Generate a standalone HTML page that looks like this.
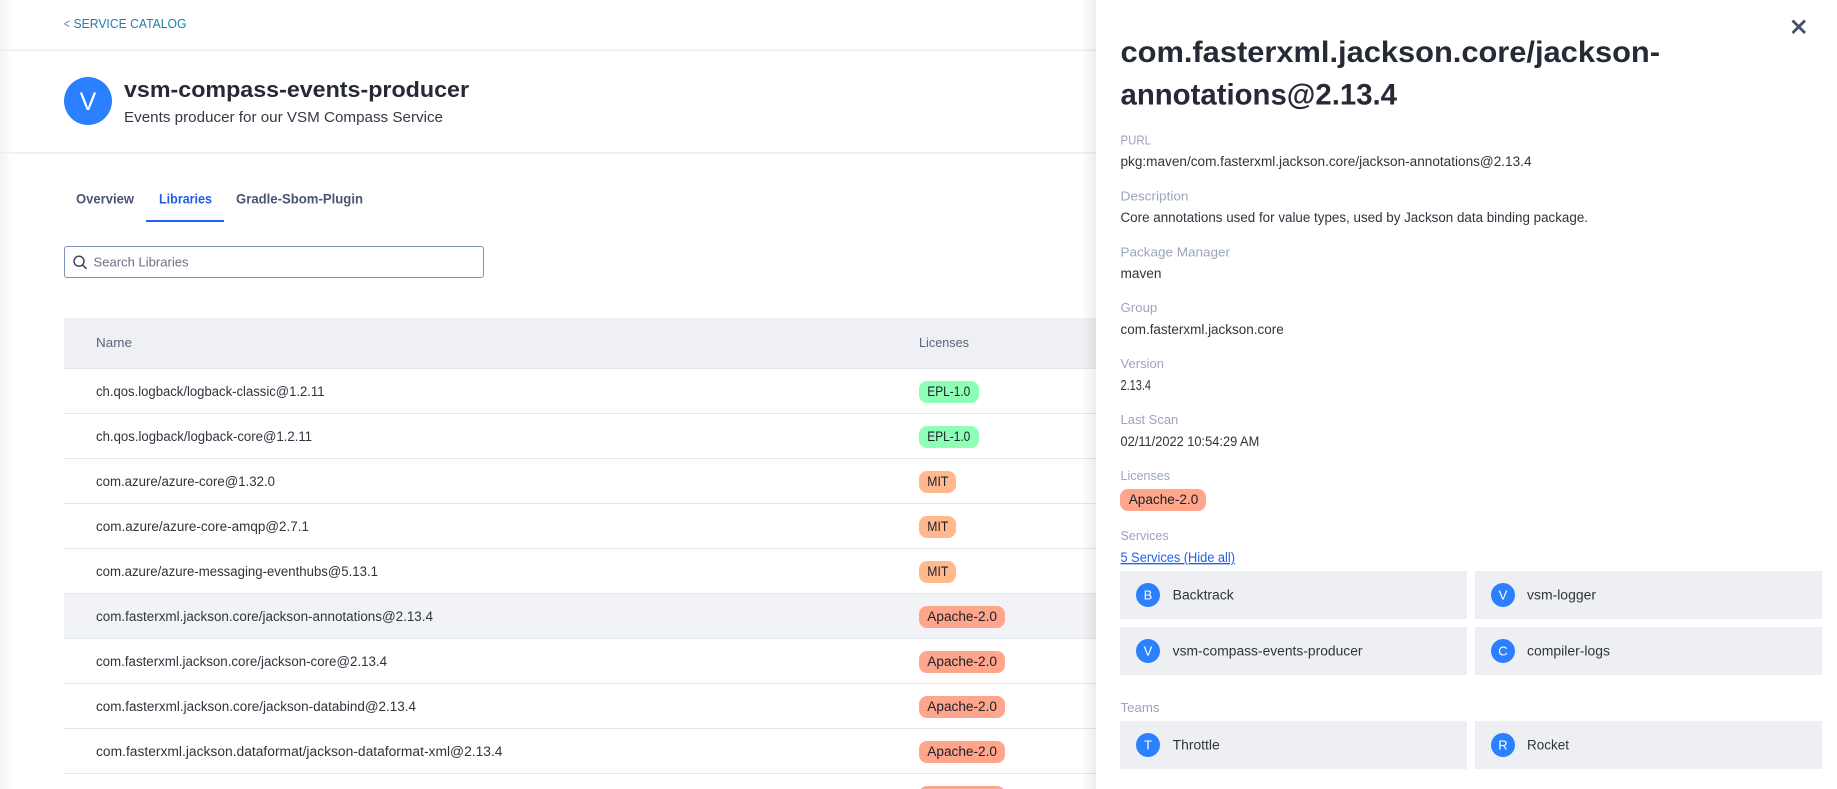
<!DOCTYPE html>
<html lang="en">
<head>
<meta charset="utf-8">
<title>vsm-compass-events-producer</title>
<style>
html,body{margin:0;padding:0;width:1837px;height:789px;overflow:hidden;background:#fff}
svg{display:block}
text{font-family:"Liberation Sans",sans-serif;font-size:13px;fill:#2f323c}
.lb{fill:#9aa4bd;font-size:13px}
.r{fill:#30333d;font-size:13.5px}
.p{fill:#1d1f26;font-size:13.5px}
.tab{font-weight:700;font-size:13.5px;fill:#4a5570}
.av{fill:#fff;font-size:13px;text-anchor:middle}
.t{font-weight:700;fill:#262a36}
.ln{fill:#e4e7ed}
.cd{fill:#eeeff3}
.a{fill:#2b80ff}
</style>
</head>
<body>
<svg xmlns="http://www.w3.org/2000/svg" width="1837" height="789" viewBox="0 0 1837 789">
<defs>
<linearGradient id="ls"><stop offset="0" stop-color="#f4f4f6"/><stop offset="1" stop-color="#fff"/></linearGradient>
<linearGradient id="ps"><stop offset="0" stop-color="#000" stop-opacity="0"/><stop offset="1" stop-color="#000" stop-opacity=".07"/></linearGradient>
</defs>
<rect width="1837" height="789" fill="#fff"/>
<rect x="0" y="0" width="12" height="789" fill="url(#ls)"/>

<text x="64" y="28" textLength="6" lengthAdjust="spacingAndGlyphs" style="fill:#6b7488;font-size:13px">&lt;</text>
<text x="73.5" y="28" textLength="113" lengthAdjust="spacingAndGlyphs" style="fill:#1f7fae;font-size:13px">SERVICE CATALOG</text>
<rect class="ln" x="0" y="49.5" width="1096" height="1.5" style="fill:#edeef2"/>

<circle class="a" cx="88" cy="101" r="24"/>
<text x="88" y="110" style="fill:#fff;font-size:25px;text-anchor:middle">V</text>
<text class="t" x="124" y="97" textLength="345" lengthAdjust="spacingAndGlyphs" style="font-size:22px">vsm-compass-events-producer</text>
<text x="124" y="122" textLength="319" lengthAdjust="spacingAndGlyphs" style="font-size:15px;fill:#353945">Events producer for our VSM Compass Service</text>
<rect class="ln" x="0" y="152" width="1096" height="1.5" style="fill:#edeef2"/>

<text class="tab" x="76" y="203.5" textLength="58" lengthAdjust="spacingAndGlyphs">Overview</text>
<text class="tab" x="159" y="203.5" textLength="53" lengthAdjust="spacingAndGlyphs" style="fill:#1e5fe6">Libraries</text>
<text class="tab" x="236" y="203.5" textLength="127" lengthAdjust="spacingAndGlyphs">Gradle-Sbom-Plugin</text>
<rect x="146" y="220" width="78" height="2" fill="#1e62f0"/>

<rect x="64.5" y="246.5" width="419" height="31" rx="2.5" fill="#fff" stroke="#8493b5"/>
<circle cx="79" cy="261.2" r="5" fill="none" stroke="#39404f" stroke-width="1.4"/>
<path d="M82.7 265L86 268.4" fill="none" stroke="#39404f" stroke-width="1.5" stroke-linecap="round"/>
<text x="93.5" y="266.3" textLength="95" lengthAdjust="spacingAndGlyphs" style="fill:#6a7183;font-size:13px">Search Libraries</text>

<rect x="64" y="318" width="1032" height="50" fill="#eff0f4"/>
<rect class="ln" x="64" y="368" width="1032" height="1"/>
<text x="96" y="347" textLength="36" lengthAdjust="spacingAndGlyphs" style="fill:#59637c">Name</text>
<text x="919" y="347" textLength="50" lengthAdjust="spacingAndGlyphs" style="fill:#59637c">Licenses</text>

<rect x="64" y="594" width="1032" height="44" fill="#f2f3f7"/>

<rect class="ln" x="64" y="413" width="1032" height="1"/>
<rect class="ln" x="64" y="458" width="1032" height="1"/>
<rect class="ln" x="64" y="503" width="1032" height="1"/>
<rect class="ln" x="64" y="548" width="1032" height="1"/>
<rect class="ln" x="64" y="593" width="1032" height="1"/>
<rect class="ln" x="64" y="638" width="1032" height="1"/>
<rect class="ln" x="64" y="683" width="1032" height="1"/>
<rect class="ln" x="64" y="728" width="1032" height="1"/>
<rect class="ln" x="64" y="773" width="1032" height="1"/>

<text class="r" x="96" y="396" textLength="228.5" lengthAdjust="spacingAndGlyphs">ch.qos.logback/logback-classic@1.2.11</text>
<text class="r" x="96" y="441" textLength="216" lengthAdjust="spacingAndGlyphs">ch.qos.logback/logback-core@1.2.11</text>
<text class="r" x="96" y="486" textLength="179" lengthAdjust="spacingAndGlyphs">com.azure/azure-core@1.32.0</text>
<text class="r" x="96" y="531" textLength="213" lengthAdjust="spacingAndGlyphs">com.azure/azure-core-amqp@2.7.1</text>
<text class="r" x="96" y="576" textLength="282" lengthAdjust="spacingAndGlyphs">com.azure/azure-messaging-eventhubs@5.13.1</text>
<text class="r" x="96" y="621" textLength="337" lengthAdjust="spacingAndGlyphs">com.fasterxml.jackson.core/jackson-annotations@2.13.4</text>
<text class="r" x="96" y="666" textLength="291" lengthAdjust="spacingAndGlyphs">com.fasterxml.jackson.core/jackson-core@2.13.4</text>
<text class="r" x="96" y="711" textLength="320" lengthAdjust="spacingAndGlyphs">com.fasterxml.jackson.core/jackson-databind@2.13.4</text>
<text class="r" x="96" y="756" textLength="406.5" lengthAdjust="spacingAndGlyphs">com.fasterxml.jackson.dataformat/jackson-dataformat-xml@2.13.4</text>

<rect x="919" y="381" width="60" height="22" rx="8" fill="#8dffb6"/>
<text class="p" x="927.3" y="396" textLength="43" lengthAdjust="spacingAndGlyphs">EPL-1.0</text>
<rect x="919" y="426" width="60" height="22" rx="8" fill="#8dffb6"/>
<text class="p" x="927.3" y="441" textLength="43" lengthAdjust="spacingAndGlyphs">EPL-1.0</text>
<rect x="919" y="471" width="37" height="22" rx="8" fill="#ffb98c"/>
<text class="p" x="927.3" y="486" textLength="21" lengthAdjust="spacingAndGlyphs">MIT</text>
<rect x="919" y="516" width="37" height="22" rx="8" fill="#ffb98c"/>
<text class="p" x="927.3" y="531" textLength="21" lengthAdjust="spacingAndGlyphs">MIT</text>
<rect x="919" y="561" width="37" height="22" rx="8" fill="#ffb98c"/>
<text class="p" x="927.3" y="576" textLength="21" lengthAdjust="spacingAndGlyphs">MIT</text>
<rect x="919" y="606" width="86" height="22" rx="8" fill="#ffa58c"/>
<text class="p" x="927.3" y="621" textLength="69.7" lengthAdjust="spacingAndGlyphs">Apache-2.0</text>
<rect x="919" y="651" width="86" height="22" rx="8" fill="#ffa58c"/>
<text class="p" x="927.3" y="666" textLength="69.7" lengthAdjust="spacingAndGlyphs">Apache-2.0</text>
<rect x="919" y="696" width="86" height="22" rx="8" fill="#ffa58c"/>
<text class="p" x="927.3" y="711" textLength="69.7" lengthAdjust="spacingAndGlyphs">Apache-2.0</text>
<rect x="919" y="741" width="86" height="22" rx="8" fill="#ffa58c"/>
<text class="p" x="927.3" y="756" textLength="69.7" lengthAdjust="spacingAndGlyphs">Apache-2.0</text>
<rect x="919" y="786" width="86" height="22" rx="8" fill="#ffa58c"/>

<rect x="1082" y="0" width="14" height="789" fill="url(#ps)"/>
<rect x="1096" y="0" width="741" height="789" fill="#fff"/>

<path d="M1792.5 20.5L1805 33M1805 20.5L1792.5 33" fill="none" stroke="#42526e" stroke-width="2.8" stroke-linecap="butt"/>

<text class="t" x="1120.5" y="62" textLength="539.5" lengthAdjust="spacingAndGlyphs" style="font-size:30px">com.fasterxml.jackson.core/jackson-</text>
<text class="t" x="1120.5" y="104.5" textLength="276.5" lengthAdjust="spacingAndGlyphs" style="font-size:30px">annotations@2.13.4</text>

<text class="lb" x="1120.5" y="144.5" textLength="30.5" lengthAdjust="spacingAndGlyphs">PURL</text>
<text class="r" x="1120.5" y="166.2" textLength="411" lengthAdjust="spacingAndGlyphs">pkg:maven/com.fasterxml.jackson.core/jackson-annotations@2.13.4</text>
<text class="lb" x="1120.5" y="200.5" textLength="68" lengthAdjust="spacingAndGlyphs">Description</text>
<text class="r" x="1120.5" y="222.2" textLength="467.5" lengthAdjust="spacingAndGlyphs">Core annotations used for value types, used by Jackson data binding package.</text>
<text class="lb" x="1120.5" y="256.5" textLength="109.5" lengthAdjust="spacingAndGlyphs">Package Manager</text>
<text class="r" x="1120.5" y="278.2" textLength="41" lengthAdjust="spacingAndGlyphs">maven</text>
<text class="lb" x="1120.5" y="312.2" textLength="36.8" lengthAdjust="spacingAndGlyphs">Group</text>
<text class="r" x="1120.5" y="334.2" textLength="163.2" lengthAdjust="spacingAndGlyphs">com.fasterxml.jackson.core</text>
<text class="lb" x="1120.5" y="368.2" textLength="43.5" lengthAdjust="spacingAndGlyphs">Version</text>
<text class="r" x="1120.5" y="390.2" textLength="30.5" lengthAdjust="spacingAndGlyphs" style="font-size:14.5px">2.13.4</text>
<text class="lb" x="1120.5" y="424.2" textLength="57.8" lengthAdjust="spacingAndGlyphs">Last Scan</text>
<text class="r" x="1120.5" y="446.2" textLength="138.8" lengthAdjust="spacingAndGlyphs">02/11/2022 10:54:29 AM</text>
<text class="lb" x="1120.5" y="480.2" textLength="49.5" lengthAdjust="spacingAndGlyphs">Licenses</text>
<rect x="1120" y="489" width="86" height="22" rx="8" fill="#ffa58c"/>
<text class="p" x="1128.7" y="504" textLength="69.6" lengthAdjust="spacingAndGlyphs">Apache-2.0</text>
<text class="lb" x="1120.5" y="540" textLength="48.2" lengthAdjust="spacingAndGlyphs">Services</text>
<text x="1120.5" y="562" textLength="114.5" lengthAdjust="spacingAndGlyphs" style="fill:#1e62e8;font-size:13.5px;text-decoration:underline">5 Services (Hide all)</text>

<rect class="cd" x="1120" y="571" width="347" height="48"/>
<rect class="cd" x="1475" y="571" width="347" height="48"/>
<rect class="cd" x="1120" y="627" width="347" height="48"/>
<rect class="cd" x="1475" y="627" width="347" height="48"/>
<circle class="a" cx="1148" cy="595" r="12"/><text class="av" x="1148" y="599.5">B</text>
<circle class="a" cx="1503" cy="595" r="12"/><text class="av" x="1503" y="599.5">V</text>
<circle class="a" cx="1148" cy="651" r="12"/><text class="av" x="1148" y="655.5">V</text>
<circle class="a" cx="1503" cy="651" r="12"/><text class="av" x="1503" y="655.5">C</text>
<text class="r" x="1172.7" y="599.5" textLength="61" lengthAdjust="spacingAndGlyphs">Backtrack</text>
<text class="r" x="1527" y="599.5" textLength="69" lengthAdjust="spacingAndGlyphs">vsm-logger</text>
<text class="r" x="1172.7" y="655.5" textLength="189.8" lengthAdjust="spacingAndGlyphs">vsm-compass-events-producer</text>
<text class="r" x="1527" y="655.5" textLength="83" lengthAdjust="spacingAndGlyphs">compiler-logs</text>

<text class="lb" x="1120.5" y="712" textLength="39" lengthAdjust="spacingAndGlyphs">Teams</text>
<rect class="cd" x="1120" y="721" width="347" height="48"/>
<rect class="cd" x="1475" y="721" width="347" height="48"/>
<circle class="a" cx="1148" cy="745" r="12"/><text class="av" x="1148" y="749.5">T</text>
<circle class="a" cx="1503" cy="745" r="12"/><text class="av" x="1503" y="749.5">R</text>
<text class="r" x="1172.7" y="749.5" textLength="47" lengthAdjust="spacingAndGlyphs">Throttle</text>
<text class="r" x="1527" y="749.5" textLength="42" lengthAdjust="spacingAndGlyphs">Rocket</text>
</svg>
</body>
</html>
